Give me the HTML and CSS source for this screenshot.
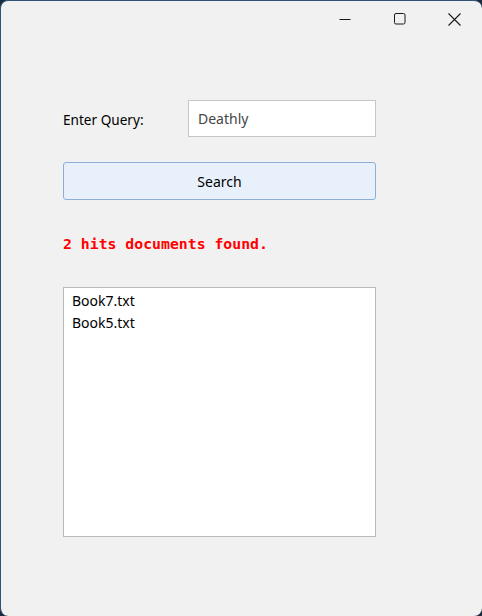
FILE: index.html
```html
<!DOCTYPE html>
<html>
<head>
<meta charset="utf-8">
<link rel="stylesheet" href="styles.css">
</head>
<body>
<div class="window">
  <div class="titlebar">
    <div class="tb-btn">
      <svg width="12" height="12" viewBox="0 0 12 12"><path d="M0.5 6.5H11.5" stroke="#1a1a1a" stroke-width="1"/></svg>
    </div>
    <div class="tb-btn">
      <svg width="12" height="12" viewBox="0 0 12 12"><rect x="0.5" y="0.5" width="10.5" height="10.5" rx="1.5" fill="none" stroke="#1a1a1a" stroke-width="1"/></svg>
    </div>
    <div class="tb-btn">
      <svg width="13" height="13" viewBox="0 0 13 13"><path d="M0.5 0.5L12.5 12.5M12.5 0.5L0.5 12.5" stroke="#1a1a1a" stroke-width="1.1"/></svg>
    </div>
  </div>
  <div class="content">
    <div class="query-row">
      <label class="label">Enter Query:</label>
      <div class="textbox">Deathly</div>
    </div>
    <div class="button">Search</div>
    <div class="result">2 hits documents found.</div>
    <div class="listbox">
      <div class="item">Book7.txt</div>
      <div class="item">Book5.txt</div>
    </div>
  </div>
</div>
</body>
</html>
```
FILE: styles.css
```css
html, body {
  margin: 0;
  padding: 0;
  background: #1b2c3e;
}
.window {
  width: 482px;
  height: 616px;
  box-sizing: border-box;
  background: #f1f1f1;
  border: 1px solid #2e5274;
  border-right: none;
  border-bottom: none;
  border-radius: 8px;
  font-family: "Noto Sans", "Open Sans", sans-serif;
  font-size: 13.6px;
  color: #000;
  overflow: hidden;
}
.titlebar {
  height: 36px;
  display: flex;
  justify-content: flex-end;
}
.tb-btn {
  width: 55px;
  height: 36px;
  display: flex;
  align-items: center;
  justify-content: center;
}
.content {
  padding: 63px 0 0 62px;
  width: 313px;
}
.query-row {
  display: flex;
  align-items: center;
  justify-content: space-between;
  height: 37px;
}
.label {
  padding-top: 1px;
}
.textbox {
  width: 188px;
  height: 37px;
  box-sizing: border-box;
  background: #fff;
  border: 1px solid #c6c6c6;
  display: flex;
  align-items: center;
  padding-left: 9px;
  color: #454545;
  font-size: 14px;
}
.button {
  margin-top: 25px;
  height: 38px;
  box-sizing: border-box;
  background: #e8f1fb;
  border: 1px solid #8cafd6;
  border-radius: 3px;
  display: flex;
  align-items: center;
  justify-content: center;
  font-size: 14px;
}
.result {
  margin-top: 34px;
  height: 20px;
  line-height: 20px;
  font-family: "DejaVu Sans Mono", monospace;
  font-weight: bold;
  font-size: 14.8px;
  color: #ff0000;
}
.listbox {
  margin-top: 33px;
  height: 250px;
  box-sizing: border-box;
  background: #fff;
  border: 1px solid #b9b9b9;
  padding: 2px 0 0 8px;
}
.item {
  height: 22px;
  line-height: 22px;
  font-size: 14px;
}
```
